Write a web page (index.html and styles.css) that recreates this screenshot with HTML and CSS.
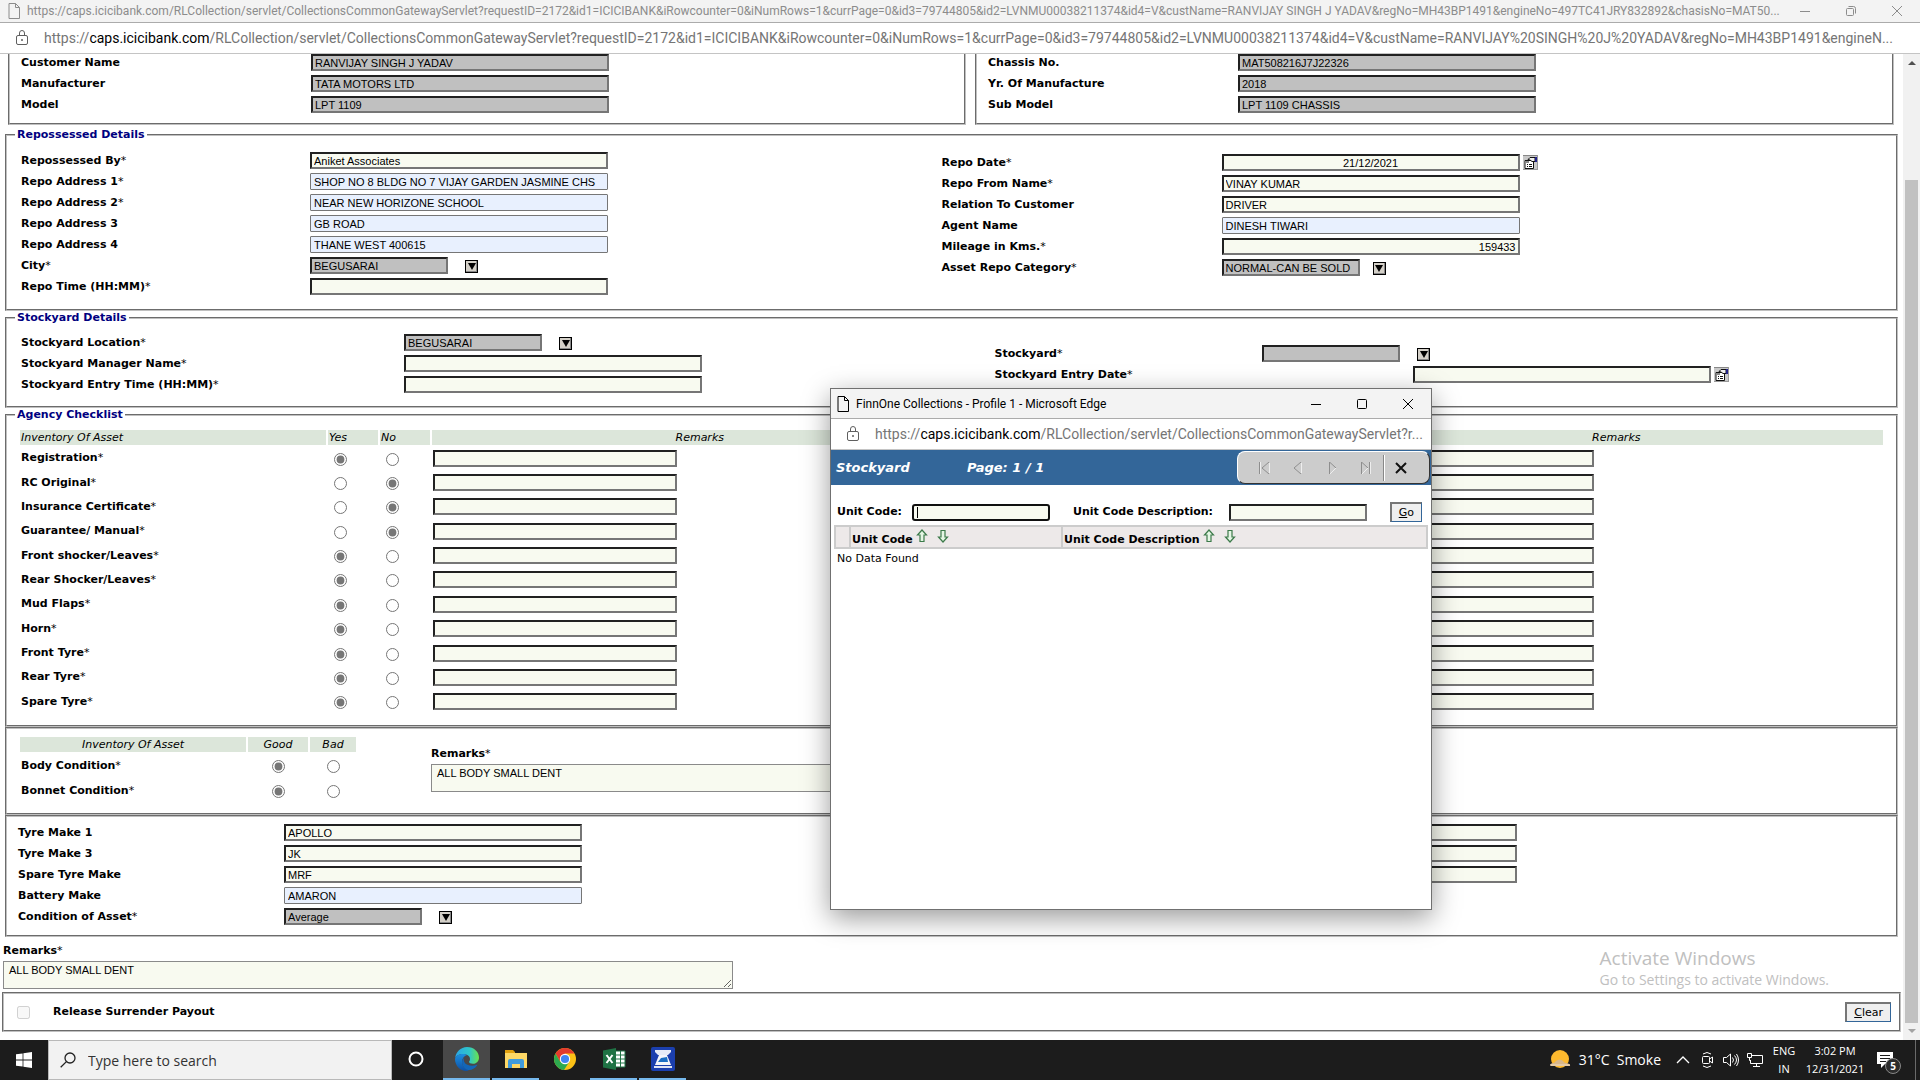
FILE: index.html
```html
<!DOCTYPE html>
<html lang="en">
<head>
  <meta charset="UTF-8" />
  <meta name="viewport" content="width=device-width, initial-scale=1.0"/>
  <title>FinnOne Collections</title>
  <link rel="stylesheet" href="styles.css">
</head>
<body>
  <!-- shared icons -->
  <svg class="sprite" aria-hidden="true">
    <symbol id="i-page" viewBox="0 0 12 16"><path d="M1 .5h6.500l4 4v11H1zM7.500 .5v4h4" fill="none" stroke="currentColor"/></symbol>
    <symbol id="i-lock" viewBox="0 0 12 16"><rect x=".5" y="5.500" width="11" height="9" rx="1.500" fill="none" stroke="currentColor"/><path d="M3.500 5.500V3a2.500 2.500 0 0 1 5 0v2.500" fill="none" stroke="currentColor"/><circle cx="6" cy="10" r="1" fill="currentColor"/></symbol>
    <symbol id="i-min" viewBox="0 0 10 10"><path d="M0 5.500h10" stroke="currentColor"/></symbol>
    <symbol id="i-max" viewBox="0 0 10 10"><rect x=".5" y=".5" width="9" height="9" rx="1" fill="none" stroke="currentColor"/></symbol>
    <symbol id="i-restore" viewBox="0 0 10 10"><rect x=".5" y="2.500" width="7" height="7" rx="1" fill="none" stroke="currentColor"/><path d="M2.500 .5h5a2 2 0 0 1 2 2v5" fill="none" stroke="currentColor"/></symbol>
    <symbol id="i-close" viewBox="0 0 10 10"><path d="M0 0l10 10M10 0L0 10" stroke="currentColor"/></symbol>
    <symbol id="i-cal" viewBox="0 0 15 15">
      <path d="M0 0h15v15H0z" fill="#c8c8c8"/><path d="M0 .5h15" stroke="#888"/><path d="M14.500 0v15M0 14.500h15" stroke="#999"/>
      <path d="M2 5.500h8.500v8H2z" fill="#fff" stroke="#111"/><path d="M3 7h3" stroke="#111"/><path d="M4 9.500h1M6 9.500h3M4 11.500h1M6 11.500h3" stroke="#111"/>
      <path d="M5 4.500l2-2h5v4H9L7 5z" fill="#eee" stroke="#111"/><path d="M13 2v5" stroke="#228" stroke-width="2"/>
    </symbol>
    <symbol id="i-up" viewBox="0 0 12 14"><path d="M6 1l4.500 5H8v6.500H4V6H1.500z" fill="#e4f6e4" stroke="#3c7a4a" stroke-width="1.200"/></symbol>
    <symbol id="i-down" viewBox="0 0 12 14"><path d="M6 13L1.500 8H4V1.500h4V8h2.500z" fill="#e4f6e4" stroke="#3c7a4a" stroke-width="1.200"/></symbol>
  </svg>

  <header class="titlebar">
    <svg class="page-icon"><use href="#i-page"/></svg>
    <span class="title-text">https://caps.icicibank.com/RLCollection/servlet/CollectionsCommonGatewayServlet?requestID=2172&amp;id1=ICICIBANK&amp;iRowcounter=0&amp;iNumRows=1&amp;currPage=0&amp;id3=79744805&amp;id2=LVNMU00038211374&amp;id4=V&amp;custName=RANVIJAY SINGH J YADAV&amp;regNo=MH43BP1491&amp;engineNo=497TC41JRY832892&amp;chasisNo=MAT50...</span>
    <div class="win-buttons">
      <button aria-label="Minimize"><svg><use href="#i-min"/></svg></button>
      <button aria-label="Restore"><svg><use href="#i-restore"/></svg></button>
      <button aria-label="Close"><svg><use href="#i-close"/></svg></button>
    </div>
  </header>
  <div class="urlbar">
    <svg class="lock-icon"><use href="#i-lock"/></svg>
    <span>https://<b>caps.icicibank.com</b>/RLCollection/servlet/CollectionsCommonGatewayServlet?requestID=2172&amp;id1=ICICIBANK&amp;iRowcounter=0&amp;iNumRows=1&amp;currPage=0&amp;id3=79744805&amp;id2=LVNMU00038211374&amp;id4=V&amp;custName=RANVIJAY%20SINGH%20J%20YADAV&amp;regNo=MH43BP1491&amp;engineN...</span>
  </div>

  <div class="viewport">
    <main class="page">
      <div class="top-pair">
        <fieldset class="cut">
          <div class="row"><label for="cust">Customer Name</label><input class="ro" id="cust" value="RANVIJAY SINGH J YADAV" readonly></div>
          <div class="row"><label for="manu">Manufacturer</label><input class="ro" id="manu" value="TATA MOTORS LTD" readonly></div>
          <div class="row"><label for="model">Model</label><input class="ro" id="model" value="LPT 1109" readonly></div>
        </fieldset>
        <fieldset class="cut cut-right">
          <div class="row"><label for="chassis">Chassis No.</label><input class="ro" id="chassis" value="MAT508216J7J22326" readonly></div>
          <div class="row"><label for="year">Yr. Of Manufacture</label><input class="ro" id="year" value="2018" readonly></div>
          <div class="row"><label for="submodel">Sub Model</label><input class="ro" id="submodel" value="LPT 1109 CHASSIS" readonly></div>
        </fieldset>
      </div>

      <fieldset class="repo">
        <legend>Repossessed Details</legend>
        <div class="cols">
          <div>
            <div class="row"><label for="repoby">Repossessed By<i>*</i></label><input id="repoby" value="Aniket Associates"></div>
            <div class="row"><label for="addr1">Repo Address 1<i>*</i></label><input class="auto" id="addr1" value="SHOP NO 8 BLDG NO 7 VIJAY GARDEN JASMINE CHS"></div>
            <div class="row"><label for="addr2">Repo Address 2<i>*</i></label><input class="auto" id="addr2" value="NEAR NEW HORIZONE SCHOOL"></div>
            <div class="row"><label for="addr3">Repo Address 3</label><input class="auto" id="addr3" value="GB ROAD"></div>
            <div class="row"><label for="addr4">Repo Address 4</label><input class="auto" id="addr4" value="THANE WEST 400615"></div>
            <div class="row"><label for="city">City<i>*</i></label><input class="ro short" id="city" value="BEGUSARAI" readonly><button class="lov" aria-label="Select city"></button></div>
            <div class="row"><label for="repotime">Repo Time (HH:MM)<i>*</i></label><input id="repotime"></div>
          </div>
          <div class="col-right">
            <div class="row"><label for="repodate">Repo Date<i>*</i></label><input class="center" id="repodate" value="21/12/2021"><button class="cal" aria-label="Pick date"><svg><use href="#i-cal"/></svg></button></div>
            <div class="row"><label for="reponame">Repo From Name<i>*</i></label><input id="reponame" value="VINAY KUMAR"></div>
            <div class="row"><label for="relation">Relation To Customer</label><input id="relation" value="DRIVER"></div>
            <div class="row"><label for="agent">Agent Name</label><input class="auto" id="agent" value="DINESH TIWARI"></div>
            <div class="row"><label for="mileage">Mileage in Kms.<i>*</i></label><input class="num" id="mileage" value="159433"></div>
            <div class="row"><label for="category">Asset Repo Category<i>*</i></label><input class="ro short" id="category" value="NORMAL-CAN BE SOLD" readonly><button class="lov lov-near" aria-label="Select category"></button></div>
          </div>
        </div>
      </fieldset>

      <fieldset class="stock">
        <legend>Stockyard Details</legend>
        <div class="cols">
          <div>
            <div class="row"><label for="yardloc">Stockyard Location<i>*</i></label><input class="ro short" id="yardloc" value="BEGUSARAI" readonly><button class="lov" aria-label="Select location"></button></div>
            <div class="row"><label for="yardmgr">Stockyard Manager Name<i>*</i></label><input id="yardmgr"></div>
            <div class="row"><label for="yardtime">Stockyard Entry Time (HH:MM)<i>*</i></label><input id="yardtime"></div>
          </div>
          <div class="col-right">
            <div class="row"><label for="yard">Stockyard<i>*</i></label><input class="ro short" id="yard" readonly><button class="lov" aria-label="Select stockyard"></button></div>
            <div class="row wide-label"><label for="yarddate">Stockyard Entry Date<i>*</i></label><input id="yarddate"><button class="cal" aria-label="Pick date"><svg><use href="#i-cal"/></svg></button></div>
          </div>
        </div>
      </fieldset>

      <fieldset class="agency">
        <legend>Agency Checklist</legend>
        <table class="checklist">
          <colgroup><col class="c-name"><col class="c-opt"><col class="c-opt"><col><col class="c-mid"><col></colgroup>
          <thead><tr><th>Inventory Of Asset</th><th>Yes</th><th>No</th><th class="mid">Remarks</th><th></th><th class="mid">Remarks</th></tr></thead>
          <tbody>
            <tr><td><label for="r1">Registration<i>*</i></label></td><td><input type="radio" name="a1" aria-label="Yes" checked></td><td><input type="radio" name="a1" aria-label="No"></td><td><input class="remark" id="r1"></td><td></td><td><input class="remark" aria-label="Remarks"></td></tr>
            <tr><td><label for="r2">RC Original<i>*</i></label></td><td><input type="radio" name="a2" aria-label="Yes"></td><td><input type="radio" name="a2" aria-label="No" checked></td><td><input class="remark" id="r2"></td><td></td><td><input class="remark" aria-label="Remarks"></td></tr>
            <tr><td><label for="r3">Insurance Certificate<i>*</i></label></td><td><input type="radio" name="a3" aria-label="Yes"></td><td><input type="radio" name="a3" aria-label="No" checked></td><td><input class="remark" id="r3"></td><td></td><td><input class="remark" aria-label="Remarks"></td></tr>
            <tr><td><label for="r4">Guarantee/ Manual<i>*</i></label></td><td><input type="radio" name="a4" aria-label="Yes"></td><td><input type="radio" name="a4" aria-label="No" checked></td><td><input class="remark" id="r4"></td><td></td><td><input class="remark" aria-label="Remarks"></td></tr>
            <tr><td><label for="r5">Front shocker/Leaves<i>*</i></label></td><td><input type="radio" name="a5" aria-label="Yes" checked></td><td><input type="radio" name="a5" aria-label="No"></td><td><input class="remark" id="r5"></td><td></td><td><input class="remark" aria-label="Remarks"></td></tr>
            <tr><td><label for="r6">Rear Shocker/Leaves<i>*</i></label></td><td><input type="radio" name="a6" aria-label="Yes" checked></td><td><input type="radio" name="a6" aria-label="No"></td><td><input class="remark" id="r6"></td><td></td><td><input class="remark" aria-label="Remarks"></td></tr>
            <tr><td><label for="r7">Mud Flaps<i>*</i></label></td><td><input type="radio" name="a7" aria-label="Yes" checked></td><td><input type="radio" name="a7" aria-label="No"></td><td><input class="remark" id="r7"></td><td></td><td><input class="remark" aria-label="Remarks"></td></tr>
            <tr><td><label for="r8">Horn<i>*</i></label></td><td><input type="radio" name="a8" aria-label="Yes" checked></td><td><input type="radio" name="a8" aria-label="No"></td><td><input class="remark" id="r8"></td><td></td><td><input class="remark" aria-label="Remarks"></td></tr>
            <tr><td><label for="r9">Front Tyre<i>*</i></label></td><td><input type="radio" name="a9" aria-label="Yes" checked></td><td><input type="radio" name="a9" aria-label="No"></td><td><input class="remark" id="r9"></td><td></td><td><input class="remark" aria-label="Remarks"></td></tr>
            <tr><td><label for="r10">Rear Tyre<i>*</i></label></td><td><input type="radio" name="a10" aria-label="Yes" checked></td><td><input type="radio" name="a10" aria-label="No"></td><td><input class="remark" id="r10"></td><td></td><td><input class="remark" aria-label="Remarks"></td></tr>
            <tr><td><label for="r11">Spare Tyre<i>*</i></label></td><td><input type="radio" name="a11" aria-label="Yes" checked></td><td><input type="radio" name="a11" aria-label="No"></td><td><input class="remark" id="r11"></td><td></td><td><input class="remark" aria-label="Remarks"></td></tr>
          </tbody>
        </table>
      </fieldset>

      <fieldset class="body-cond">
        <table class="condition">
          <thead><tr><th class="c-cond">Inventory Of Asset</th><th class="c-good">Good</th><th class="c-bad">Bad</th></tr></thead>
          <tbody>
            <tr><td>Body Condition<i>*</i></td><td><input type="radio" name="bc" aria-label="Body condition good" checked></td><td><input type="radio" name="bc" aria-label="Body condition bad"></td></tr>
            <tr><td>Bonnet Condition<i>*</i></td><td><input type="radio" name="bn" aria-label="Bonnet condition good" checked></td><td><input type="radio" name="bn" aria-label="Bonnet condition bad"></td></tr>
          </tbody>
        </table>
        <div class="notes">
          <label for="bodyrem">Remarks<i>*</i></label>
          <textarea id="bodyrem">ALL BODY SMALL DENT</textarea>
        </div>
      </fieldset>

      <fieldset class="tyres">
        <div class="cols">
          <div>
            <div class="row"><label for="tm1">Tyre Make 1</label><input id="tm1" value="APOLLO"></div>
            <div class="row"><label for="tm3">Tyre Make 3</label><input id="tm3" value="JK"></div>
            <div class="row"><label for="stm">Spare Tyre Make</label><input id="stm" value="MRF"></div>
            <div class="row"><label for="bat">Battery Make</label><input class="auto" id="bat" value="AMARON"></div>
            <div class="row"><label for="cond">Condition of Asset<i>*</i></label><input class="ro short" id="cond" value="Average" readonly><button class="lov" aria-label="Select condition"></button></div>
          </div>
          <div class="col-right">
            <div class="row"><input aria-label="Tyre make 2"></div>
            <div class="row"><input aria-label="Tyre make 4"></div>
            <div class="row"><input aria-label="Spare tyre number"></div>
          </div>
        </div>
      </fieldset>

      <div class="notes page-notes">
        <label for="rem">Remarks<i>*</i></label>
        <textarea id="rem">ALL BODY SMALL DENT</textarea>
      </div>

      <div class="release">
        <input type="checkbox" id="payout" disabled>
        <label for="payout">Release Surrender Payout</label>
        <button class="btn"><u>C</u>lear</button>
      </div>
    </main>
    <div class="scrollbar" aria-hidden="true">
      <span class="arrow-up"></span>
      <span class="thumb"></span>
      <span class="arrow-down"></span>
    </div>
  </div>

  <div class="watermark"><strong>Activate Windows</strong><span>Go to Settings to activate Windows.</span></div>

  <section class="popup">
    <div class="popup-title">
      <svg class="page-icon"><use href="#i-page"/></svg>
      <span class="title-text">FinnOne Collections - Profile 1 - Microsoft Edge</span>
      <div class="win-buttons">
        <button aria-label="Minimize"><svg><use href="#i-min"/></svg></button>
        <button aria-label="Maximize"><svg><use href="#i-max"/></svg></button>
        <button aria-label="Close"><svg><use href="#i-close"/></svg></button>
      </div>
    </div>
    <div class="popup-url">
      <svg class="lock-icon"><use href="#i-lock"/></svg>
      <span>https://<b>caps.icicibank.com</b>/RLCollection/servlet/CollectionsCommonGatewayServlet?r...</span>
    </div>
    <div class="popup-head">
      <span class="head-name">Stockyard</span><span>Page: 1 / 1</span>
      <div class="pager">
        <button aria-label="First"><svg viewBox="0 0 12 12"><path d="M1.500 0v12M11 0L4 6l7 6" fill="none" stroke="#8e8e8e"/><path d="M2.500 0v12M11.500 1v10" stroke="#eee"/></svg></button>
        <button aria-label="Previous"><svg viewBox="0 0 12 12"><path d="M9 0L2 6l7 6" fill="none" stroke="#8e8e8e"/><path d="M9.500 1v10" stroke="#eee"/></svg></button>
        <button aria-label="Next"><svg viewBox="0 0 12 12"><path d="M3.500 12V0L10 6" fill="none" stroke="#8e8e8e"/><path d="M10 6l-6 6" stroke="#eee"/></svg></button>
        <button aria-label="Last"><svg viewBox="0 0 12 12"><path d="M1.500 12V0L8 6M9.500 0v12" fill="none" stroke="#8e8e8e"/><path d="M8 6l-6 6M10.500 0v12" stroke="#eee"/></svg></button>
        <button class="pager-close" aria-label="Close"><svg viewBox="0 0 12 12"><path d="M1 1l10 10M11 1L1 11" stroke="#111" stroke-width="2"/></svg></button>
      </div>
    </div>
    <form class="search">
      <label for="unit">Unit Code:</label><input class="short focused" id="unit" value="">
      <label class="desc" for="unitdesc">Unit Code Description:</label><input class="short" id="unitdesc">
      <button class="btn" type="button"><u>G</u>o</button>
    </form>
    <table class="results">
      <tr>
        <th class="pick"></th>
        <th class="code">Unit Code <svg><use href="#i-up"/></svg><svg><use href="#i-down"/></svg></th>
        <th>Unit Code Description <svg><use href="#i-up"/></svg><svg><use href="#i-down"/></svg></th>
      </tr>
    </table>
    <p>No Data Found</p>
  </section>

  <footer class="taskbar">
    <button class="start" aria-label="Start"><svg viewBox="0 0 16 16" fill="#fff"><path d="M0 2.300L6.600 1.400v6.200H0zM7.400 1.300L16 0v7.600H7.400zM0 8.400h6.600v6.200L0 13.700zM7.400 8.400H16V16l-8.600-1.300z"/></svg></button>
    <div class="search-box">
      <svg viewBox="0 0 16 16"><circle cx="10" cy="6" r="5" fill="none" stroke="#222" stroke-width="1.300"/><path d="M6.400 9.600L.7 15.300" stroke="#222" stroke-width="1.300"/></svg>
      <input placeholder="Type here to search" aria-label="Search">
    </div>
    <button class="app cortana" aria-label="Cortana"><svg viewBox="0 0 24 24"><circle cx="12" cy="12" r="6.500" fill="none" stroke="#fff" stroke-width="2"/></svg></button>
    <button class="app current open" aria-label="Edge">
      <svg viewBox="0 0 24 24">
        <defs>
          <linearGradient id="eg" x1="0" y1="0" x2="1" y2="0"><stop offset="0" stop-color="#2aa6e8"/><stop offset=".6" stop-color="#2fc6c8"/><stop offset="1" stop-color="#6be34b"/></linearGradient>
          <linearGradient id="eb" x1="0" y1="0" x2="0" y2="1"><stop offset="0" stop-color="#1b8fe0"/><stop offset="1" stop-color="#0e4fa3"/></linearGradient>
        </defs>
        <path d="M.2 11C.8 5 5.600 0 12 0c7 0 12 5 12 10.500 0 4-3 6.300-6 6.300-2.500 0-4-.9-4-1.700 0-.7 1-1 1-3C15 8.500 11.500 7 8 7 4 7 1 9 .2 11z" fill="url(#eg)"/>
        <path d="M0 12c.5-3.500 4-5 8-5 1.500 0 3 .4 4 1-3 1-5 3.500-5 7 0 4 3.500 7.500 7 8.600-1 .3-1.500.4-2.500.4C5 24 0 18.500 0 12z" fill="url(#eb)"/>
        <path d="M9 11c-2.500 2-3 7 1 10.500 3.500 3 9 1.500 12-3 .3-.6-.2-.8-.7-.6-4.300 1.800-10.300.6-12-3-.6-1.300-.6-2.700-.3-3.900z" fill="#1266b8"/>
      </svg>
    </button>
    <button class="app open" aria-label="File Explorer"><svg viewBox="0 0 24 24"><path d="M1 3h8l2 2v3H1z" fill="#e2a10e"/><path d="M1 6h22v15H1z" fill="#fdd866"/><path d="M4 21v-7q0-2 2-2h12q2 0 2 2v7h-4v-4H8v4z" fill="#3f9bdc"/></svg></button>
    <button class="app" aria-label="Chrome"><svg viewBox="0 0 24 24"><circle cx="12" cy="12" r="11" fill="#fbc116"/><path d="M2.500 6.500A11 11 0 0 1 21.500 6.500H12L7.200 14.800z" fill="#e33b2e"/><path d="M2.500 6.500A11 11 0 0 0 11 23l5.500-8.500L7.200 14.800z" fill="#2da94f"/><circle cx="12" cy="12" r="5.200" fill="#fff"/><circle cx="12" cy="12" r="4.100" fill="#4285f4"/></svg></button>
    <button class="app open" aria-label="Excel"><svg viewBox="0 0 24 24"><path d="M13 4h10v16H13z" fill="#fff" stroke="#1f7244"/><path d="M14 8h9M14 12h9M14 16h9M18.500 4v16" stroke="#1f7244"/><path d="M1 3.500L14 1v22L1 20.500z" fill="#1f7244"/><path d="M4.500 8l6 8M10.500 8l-6 8" stroke="#fff" stroke-width="2"/></svg></button>
    <button class="app open" aria-label="Scanner"><svg viewBox="0 0 24 24"><rect width="24" height="24" rx="2" fill="#1b3fae"/><path d="M4 3h16v2l-3 3H7L4 5z" fill="#e6ecf8"/><path d="M8 8h8l4 10H4z" fill="#f4f6fb"/><path d="M10 11l6-1 1 5H7z" fill="#1b6fc4"/><path d="M3 19h18v2H3z" fill="#dfe4f4"/></svg></button>

    <div class="tray">
      <svg class="weather" viewBox="0 0 22 20"><circle cx="11" cy="9" r="9" fill="#fdb92e"/><path d="M2 16q-2-2 2-3 2 0 3-2 4-3 7 0 1 2 3 2 5 1 4 3z" fill="#d8b68a"/><path d="M1 15h20" stroke="#f0dcc0"/></svg>
      <span class="temp">31°C&nbsp; Smoke</span>
      <svg viewBox="0 0 16 16" fill="none" stroke="#fff"><path d="M2 11l6-6 6 6" stroke-width="1.300"/></svg>
      <svg viewBox="0 0 16 16" fill="none" stroke="#fff"><rect x="3.500" y="4.500" width="7" height="7" rx="1"/><path d="M10.500 7l3-2v6l-3-2M4 2q4-3 8 0M4 14q4 3 8 0"/></svg>
      <svg viewBox="0 0 16 16" fill="none" stroke="#fff"><path d="M.5 5.500h3l4-3.500v12l-4-3.500h-3zM9.500 5.500q2 2.500 0 5M11.500 3.500q4 4.500 0 9M13.500 2q4 6 0 12"/></svg>
      <svg viewBox="0 0 16 16" fill="none" stroke="#fff"><path d="M5 3.500h10.500v8H3.500V8M9.500 11.500v3M6 14.500h7M.5 1.500h4v4h-4zM2.500 5.500v3h1"/></svg>
      <div class="two-line lang">ENG<br>IN</div>
      <div class="two-line clock">3:02 PM<br>12/31/2021</div>
      <div class="action">
        <svg viewBox="0 0 16 16"><path d="M0 0h16v12H8l-4 4v-4H0z" fill="#fff"/><path d="M3 3.500h10M3 6.500h10M3 9.500h6" stroke="#1c1c1c"/></svg>
        <span class="badge">5</span>
      </div>
    </div>
  </footer>
</body>
</html>
```
FILE: styles.css
```css
* {
  margin: 0;
  padding: 0;
  box-sizing: border-box;
}
body {
  display: flex;
  flex-direction: column;
  height: 100vh;
  overflow: hidden;
  background: #fff;
  color: #000;
  font-family: "DejaVu Sans", Verdana, sans-serif;
  font-size: 11px;
  line-height: 14px;
}
button {
  border: none;
  background: none;
  font: inherit;
}
svg {
  display: block;
  flex: none;
}
.sprite {
  position: absolute;
  width: 0;
  height: 0;
}

/* browser chrome */
.titlebar, .urlbar, .popup-title, .popup-url {
  display: flex;
  align-items: center;
  flex: none;
  font-family: Roboto, "Open Sans", sans-serif;
  white-space: nowrap;
}
.titlebar {
  height: 23px;
  padding-left: 8px;
  background: #f3f3f3;
  border-bottom: 1px solid #ababab;
  color: #8c8c8c;
  font-size: 12px;
}
.title-text {
  flex: 1;
}
.page-icon {
  width: 12px;
  height: 16px;
  margin-right: 7px;
}
.lock-icon {
  width: 12px;
  height: 16px;
  color: #5f5f5f;
}
.win-buttons {
  display: flex;
}
.win-buttons button {
  width: 46px;
  height: 22px;
  color: inherit;
}
.win-buttons svg {
  width: 10px;
  height: 10px;
  margin: auto;
}
.urlbar {
  height: 31px;
  padding-left: 16px;
  gap: 16px;
  border-bottom: 1px solid #c4c4c4;
  color: #757575;
  font-size: 14px;
}
.urlbar b, .popup-url b {
  font-weight: normal;
  color: #000;
}

/* form page */
.viewport {
  display: flex;
  flex: 1;
  min-height: 0;
  overflow: hidden;
}
.page {
  flex: 1;
  min-width: 0;
}
fieldset {
  min-width: 0;
  margin: 0 5px;
  border: 2px groove #c0c0c0;
}
legend {
  margin-left: -6px;
  padding: 0 2px;
  color: #000080;
  font-weight: bold;
}
label {
  font-weight: bold;
}
label i, td i {
  font-style: normal;
  font-weight: normal;
}
input, textarea {
  border: 2px inset #767676;
  border-radius: 0;
  background: #f8faf0;
  color: #000;
  font: 11px "Liberation Sans", Arial, sans-serif;
  outline: none;
}
.row {
  display: flex;
  align-items: center;
  height: 21px;
}
.row label {
  flex: none;
  width: 290px;
}
.row input, .short {
  width: 298px;
  height: 17px;
  padding: 0 2px;
}
.row .short, .short {
  width: 138px;
}
.row .ro {
  background: #c0c0c0;
}
.row .auto {
  border: 1px solid #767676;
  border-radius: 1px;
  background: #e8f0fe;
  padding: 0 3px;
}
.center {
  text-align: center;
}
.num {
  text-align: right;
}
.lov {
  width: 13px;
  height: 13px;
  margin: 1px 0 0 17px;
  border: 1px solid #000;
  background: #d4d0c8;
  box-shadow: inset -1px -1px #888;
}
.lov::before {
  content: "";
  display: block;
  margin: 0 auto;
  width: 0;
  border: 4px solid transparent;
  border-top: 7px solid #000;
  border-bottom: 0;
}
.lov-near {
  margin-left: 13px;
}
.cal {
  margin-left: 3px;
}
.cal svg {
  width: 15px;
  height: 15px;
}
.cols {
  display: grid;
  grid-template-columns: 921fr 941fr;
}
.top-pair {
  display: grid;
  grid-template-columns: 958fr 919fr;
  gap: 9px;
  margin: -2px 9px 3px 8px;
}
.cut {
  margin: 0;
  border-top: none;
  padding: 0 11px 8px;
}
.cut-right label {
  width: 250px;
}
.repo {
  padding: 8px 14px 12px;
}
.repo label {
  width: 289px;
}
.repo .col-right {
  margin-top: 2px;
}
.repo .col-right label {
  width: 280px;
}
.stock {
  padding: 7px 14px 11px;
}
.stock .cols {
  grid-template-columns: 974fr 888fr;
}
.stock label {
  width: 383px;
}
.stock .col-right {
  margin-top: 11px;
}
.stock .col-right label {
  width: 268px;
}
.stock .col-right .wide-label label {
  width: 419px;
}

/* checklists */
.agency {
  padding: 6px 11px 10px;
}
.agency legend {
  margin-left: -3px;
}
table {
  border-spacing: 2px;
}
th {
  height: 15px;
  background: #dce6da;
  font-weight: normal;
  font-style: italic;
  line-height: 15px;
}
.checklist {
  width: 100%;
  height: 287px;
  table-layout: fixed;
}
.checklist th {
  padding-left: 1px;
  text-align: left;
}
.checklist th.mid {
  text-align: center;
}
.c-name {
  width: 306px;
}
.c-opt {
  width: 50px;
}
.c-mid {
  width: 378px;
}
td {
  padding-left: 1px;
  font-weight: bold;
  vertical-align: middle;
}
input[type="radio"] {
  display: block;
  width: 13px;
  height: 13px;
  margin: 2px 0 0 5px;
  accent-color: #767676;
}
.remark {
  display: block;
  width: 244px;
  height: 17px;
}
.body-cond {
  display: flex;
  gap: 73px;
  padding: 6px 11px 9px;
}
.condition td {
  height: 23px;
}
.condition input[type="radio"] {
  margin: 2px auto 0;
}
.c-cond {
  width: 226px;
}
.c-good {
  width: 60px;
}
.c-bad {
  width: 46px;
}
.notes {
  display: flex;
  flex-direction: column;
  align-items: flex-start;
  gap: 3px;
  margin-top: 12px;
}
textarea {
  width: 730px;
  height: 28px;
  padding: 2px 5px;
  border: 1px solid #8a8a8a;
}
.tyres {
  padding: 5px 11px 8px;
}
.tyres .cols {
  grid-template-columns: 1202fr 666fr;
}
.tyres label {
  width: 266px;
}
.page-notes {
  margin: 7px 3px 3px;
}
.release {
  display: flex;
  align-items: center;
  height: 40px;
  margin: 0 2px;
  padding: 0 8px 0 13px;
  border: 2px groove #c0c0c0;
}
.release input {
  width: 13px;
  height: 13px;
  margin-right: 23px;
}
.btn {
  height: 20px;
  padding: 0 7px;
  border: 2px solid #767676;
  border-right: 1px solid #336699;
  border-bottom: 1px solid #336699;
  background: #efefef;
}
.release .btn {
  margin-left: auto;
}

/* scrollbar */
.scrollbar {
  display: flex;
  flex-direction: column;
  align-items: center;
  width: 17px;
  padding: 7px 0;
  background: #f1f1f1;
}
.arrow-up, .arrow-down {
  border: 4px solid transparent;
}
.arrow-up {
  border-top: 0;
  border-bottom: 4px solid #505050;
}
.arrow-down {
  border-bottom: 0;
  border-top: 4px solid #a3a3a3;
}
.thumb {
  flex: 1;
  width: 13px;
  margin: 115px 0 6px;
  background: #c1c1c1;
}

.watermark {
  position: absolute;
  right: 91px;
  bottom: 90px;
  color: #c0c0c0;
  font-family: "Open Sans", "Noto Sans", sans-serif;
}
.watermark strong, .watermark span {
  display: block;
  font-weight: normal;
}
.watermark strong {
  font-size: 19px;
  line-height: 24px;
}
.watermark span {
  font-size: 14px;
  line-height: 20px;
}

/* lookup window, floats over the form */
.popup {
  position: absolute;
  left: 830px;
  top: 388px;
  width: 602px;
  height: 522px;
  border: 1px solid #707070;
  background: #fff;
  box-shadow: 0 8px 26px rgba(0, 0, 0, .4);
}
.popup-title {
  height: 30px;
  padding-left: 6px;
  background: #f3f3f3;
  border-bottom: 1px solid #ababab;
  font-size: 12px;
}
.popup-url {
  height: 31px;
  padding-left: 16px;
  gap: 16px;
  border-bottom: 1px solid #c4c4c4;
  color: #757575;
  font-size: 14px;
}
.popup-head {
  display: flex;
  align-items: center;
  height: 35px;
  padding: 0 1px 0 5px;
  background: #336699;
  color: #fff;
  font-size: 13px;
  font-weight: bold;
  font-style: italic;
}
.head-name {
  width: 131px;
}
.pager {
  display: flex;
  align-items: center;
  width: 193px;
  height: 33px;
  margin-left: auto;
  padding-left: 9px;
  border: 1px solid #fff;
  border-right-color: #333;
  border-bottom-color: #333;
  border-radius: 8px;
  background: #ccc;
}
.pager button {
  width: 34px;
}
.pager svg {
  width: 12px;
  height: 12px;
  margin: auto;
}
.pager .pager-close {
  height: 26px;
  border-left: 1px solid #888;
  box-shadow: inset 1px 0 #fff;
}
.search {
  display: flex;
  align-items: center;
  margin-top: 17px;
  padding: 0 9px 0 6px;
  height: 20px;
}
.search label {
  width: 75px;
}
.search .desc {
  width: 156px;
  margin-left: 23px;
}
.search .btn {
  margin-left: auto;
}
/* focused box with its caret */
.focused {
  border: 2px solid #101010;
  border-radius: 3px;
  background: linear-gradient(#000, #000) 3px 1px / 1px 11px no-repeat #f8faf0;
}
.results {
  width: 594px;
  margin: 3px 0 0 3px;
  border: 2px solid #ccc;
  border-collapse: collapse;
}
.results th {
  height: 22px;
  padding-left: 1px;
  border: 2px solid #ccc;
  background: #ede9e9;
  font-weight: bold;
  font-style: normal;
  text-align: left;
  vertical-align: bottom;
}
.results .pick {
  width: 15px;
}
.results .code {
  width: 212px;
}
.results svg {
  display: inline-block;
  width: 12px;
  height: 14px;
  margin-right: 9px;
  vertical-align: 0;
}
.popup p {
  padding: 3px 6px;
}

/* taskbar */
.taskbar {
  display: flex;
  flex: none;
  height: 40px;
  background: #1c1c1c;
  color: #fff;
  font-family: "Open Sans", "Noto Sans", sans-serif;
}
.start {
  width: 48px;
}
.start svg {
  width: 16px;
  height: 16px;
  margin: auto;
}
.search-box {
  display: flex;
  align-items: center;
  gap: 12px;
  width: 344px;
  padding-left: 11px;
  border: 1px solid #b9b9b9;
  background: #f2f2f2;
}
.search-box svg {
  width: 16px;
  height: 16px;
}
.search-box input {
  flex: 1;
  border: none;
  background: none;
  font: 14px "Open Sans", "Noto Sans", sans-serif;
}
.search-box input::placeholder {
  color: #333;
}
.app {
  width: 47px;
  margin-right: 2px;
  border-bottom: 2px solid transparent;
}
.cortana {
  margin-right: 4px;
}
.app svg {
  width: 24px;
  height: 24px;
  margin: auto;
}
.open {
  border-bottom-color: #76b9ed;
}
.current {
  background: #484848;
}
.tray {
  display: flex;
  align-items: center;
  gap: 8px;
  margin: 0 4px 0 auto;
  padding-right: 14px;
  border-right: 1px solid #6a6a6a;
}
.tray svg {
  width: 16px;
  height: 16px;
}
.tray .weather {
  width: 22px;
  height: 20px;
}
.temp {
  margin-right: 6px;
  font-size: 14px;
}
.two-line {
  font-size: 11px;
  line-height: 18px;
  text-align: center;
}
.lang {
  width: 26px;
}
.clock {
  width: 60px;
}
.action {
  position: relative;
  margin: 0 0 0 4px;
  padding-right: 8px;
}
.badge {
  position: absolute;
  left: 8px;
  top: 6px;
  width: 16px;
  height: 16px;
  border: 1px solid #888;
  border-radius: 50%;
  background: #2b2b2b;
  font-size: 10px;
  font-weight: bold;
  line-height: 14px;
  text-align: center;
}
```
